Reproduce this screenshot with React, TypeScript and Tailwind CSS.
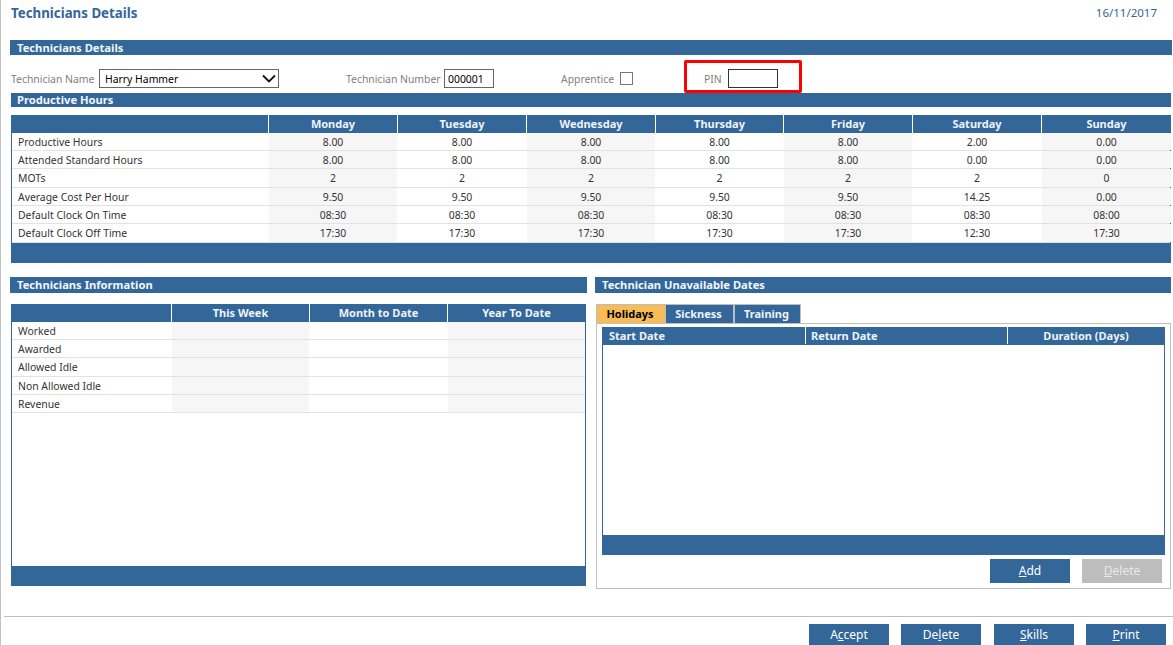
const F = { fontFamily: '"Noto Sans", "Liberation Sans", sans-serif' };

const days = ['Monday', 'Tuesday', 'Wednesday', 'Thursday', 'Friday', 'Saturday', 'Sunday'];
const hours: [string, string[], string][] = [
  ['Productive Hours', ['8.00', '8.00', '8.00', '8.00', '8.00', '2.00', '0.00'], 'h-[18px]'],
  ['Attended Standard Hours', ['8.00', '8.00', '8.00', '8.00', '8.00', '0.00', '0.00'], 'h-[18px]'],
  ['MOTs', ['2', '2', '2', '2', '2', '2', '0'], 'h-[19px]'],
  ['Average Cost Per Hour', ['9.50', '9.50', '9.50', '9.50', '9.50', '14.25', '0.00'], 'h-[18px]'],
  ['Default Clock On Time', ['08:30', '08:30', '08:30', '08:30', '08:30', '08:30', '08:00'], 'h-[18px]'],
  ['Default Clock Off Time', ['17:30', '17:30', '17:30', '17:30', '17:30', '12:30', '17:30'], 'h-[19px]'],
];
const hoursCols = 'grid grid-cols-[256px_128px_128px_128px_127px_128px_128px_129px] gap-x-px leading-[13px]';
const infoCols = 'grid grid-cols-[159px_137px_137px_137px] gap-x-px leading-[13px]';
const infoRows: [string, string][] = [
  ['Worked', 'h-[18px]'],
  ['Awarded', 'h-[18px]'],
  ['Allowed Idle', 'h-[19px]'],
  ['Non Allowed Idle', 'h-[18px]'],
  ['Revenue', 'h-[18px]'],
];

function Bar({ title, className }: { title: string; className: string }) {
  return (
    <div className={`bg-[#336699] text-[#f2f6fa] font-bold text-[11.2px] leading-none flex items-center ${className}`}>
      {title}
    </div>
  );
}

function Btn({ pre, u, post, className }: { pre: string; u: string; post: string; className: string }) {
  return (
    <button className={`w-20 text-[12px] flex items-center justify-center ${className}`}>
      {pre}
      <span className="underline">{u}</span>
      {post}
    </button>
  );
}

export default function App() {
  return (
    <div style={F} className="w-[1173px] h-[645px] overflow-hidden bg-white text-[10.4px] text-[#333333] border-l border-[#c0c0c0]">
      <div className="h-[40px] pl-[10px] pr-[16px] pt-[5px] flex justify-between text-[#336699]">
        <div className="font-bold text-[13.3px] leading-[16px]">Technicians Details</div>
        <div className="text-[11.5px] leading-[16px]">16/11/2017</div>
      </div>

      <div className="ml-[9px] w-[1162px]">
        <Bar title="Technicians Details" className="h-[15px] pl-[7px]" />
      </div>

      <div className="ml-[10px] h-[38px] flex items-start text-[#808080] whitespace-nowrap">
        <div className="mt-[14px] pt-[2px] h-[19px] flex items-center w-[88px]">Technician Name</div>
        <div className="mt-[14px] pt-[2px] w-[180px] h-[19px] border border-[#666666] flex items-center justify-between pl-[5px] pr-[2px] text-black">
          <span>Harry Hammer</span>
          <svg className="-mt-[3px]" width="14" height="9" viewBox="0 0 14 9" fill="none" stroke="#111111" strokeWidth="1.8">
            <path d="M1 1.5 L7 7.5 L13 1.5" />
          </svg>
        </div>
        <div className="mt-[14px] pt-[2px] ml-[67px] h-[19px] flex items-center w-[98px]">Technician Number</div>
        <div className="mt-[14px] pt-[2px] w-[50px] h-[19px] border border-[#666666] flex items-center pl-[3px] text-black">000001</div>
        <div className="mt-[14px] pt-[2px] ml-[67px] h-[19px] flex items-center w-[59px]">Apprentice</div>
        <div className="mt-[17px] w-[13px] h-[13px] border border-[#777777]" />
        <div className="mt-[5px] ml-[51px] w-[118px] h-[33px] border-[3px] border-[#ff0000] rounded-[2px] flex items-start relative z-10 bg-white">
          <span className="ml-[17px] mt-[6px] pt-[2px] w-[24px] h-[19px] flex items-center">PIN</span>
          <div className="mt-[6px] w-[50px] h-[19px] border border-[#333333]" />
        </div>
      </div>

      <div className="ml-[10px] w-[1160px]">
        <Bar title="Productive Hours" className="h-[14px] pl-[6px]" />
      </div>

      <div className="ml-[10px] mt-[8px] w-[1160px] border-x border-[#336699]">
        <div className={`${hoursCols} bg-[#336699] h-[18px]`}>
          <div />
          {days.map((d) => (
            <div key={d} className="relative pb-[2px] font-bold text-[#eef3f8] text-[11px] flex items-center justify-center before:absolute before:left-[-1px] before:top-0 before:bottom-0 before:w-px before:bg-white">
              {d}
            </div>
          ))}
        </div>
        {hours.map(([label, vals, h]) => {
          const pt = h === 'h-[19px]' ? 'pt-px' : 'pt-[2px]';
          return (
            <div key={label} className={`${hoursCols} ${h} border-b border-[#e2e2e2]`}>
              <div className={`pl-[6px] flex items-center ${pt}`}>{label}</div>
              {vals.map((v, i) => (
                <div key={i} className={`flex items-center justify-center ${pt} ${i % 2 === 0 ? 'bg-[#f6f6f6]' : 'bg-white'}`}>
                  {v}
                </div>
              ))}
            </div>
          );
        })}
      </div>
      <div className="ml-[10px] w-[1160px] h-[20px] bg-[#336699]" />

      <div className="mt-[14px] ml-[9px] w-[1161px] flex gap-[8px] items-start">
        <div className="w-[577px]">
          <Bar title="Technicians Information" className="h-[16px] pl-[7px]" />
          <div className="mt-[11px] ml-[1px] w-[575px] h-[282px] flex flex-col border-x border-[#336699]">
            <div className={`${infoCols} bg-[#336699] h-[18px]`}>
              <div />
              {['This Week', 'Month to Date', 'Year To Date'].map((d) => (
                <div key={d} className="relative pb-[2px] font-bold text-[#eef3f8] text-[11px] flex items-center justify-center before:absolute before:left-[-1px] before:top-0 before:bottom-0 before:w-px before:bg-white">
                  {d}
                </div>
              ))}
            </div>
            {infoRows.map(([label, h]) => (
              <div key={label} className={`${infoCols} ${h} border-b border-[#e2e2e2]`}>
                <div className={`pl-[6px] flex items-center ${h === 'h-[19px]' ? 'pt-px' : 'pt-[2px]'}`}>{label}</div>
                <div className="bg-[#f6f6f6]" />
                <div />
                <div className="bg-[#f6f6f6]" />
              </div>
            ))}
            <div className="mt-auto h-[20px] bg-[#336699] -mx-px" />
          </div>
        </div>

        <div className="w-[576px]">
          <Bar title="Technician Unavailable Dates" className="h-[16px] pl-[7px]" />
          <div className="mt-[11px] ml-[1px] w-[205px] flex h-[19px] items-stretch font-bold text-[11px] bg-[#b9bec4] pl-px pr-px pt-px gap-x-px">
            <div className="w-[68px] pr-[2px] bg-[#f7bc55] text-black flex items-center justify-center">Holidays</div>
            <div className="w-[67px] pr-[2px] bg-[#336699] text-[#eef3f8] flex items-center justify-center">Sickness</div>
            <div className="ml-px w-[65px] pr-[2px] bg-[#336699] text-[#eef3f8] flex items-center justify-center">Training</div>
          </div>
          <div className="ml-[1px] w-[575px] h-[266px] border border-[#c0c0c0] px-[5px] pt-[3px]">
            <div className="h-[208px] flex flex-col border-x border-[#336699]">
              <div className="grid grid-cols-[202px_201px_1fr] gap-x-px bg-[#336699] h-[18px] font-bold text-[#eef3f8] text-[11px]">
                <div className="pl-[6px] pt-px flex items-center">Start Date</div>
                <div className="relative pl-[5px] pt-px flex items-center before:absolute before:left-[-1px] before:top-0 before:bottom-[1px] before:w-px before:bg-white">Return Date</div>
                <div className="relative pt-px flex items-center justify-center before:absolute before:left-[-1px] before:top-0 before:bottom-[1px] before:w-px before:bg-white">Duration (Days)</div>
              </div>
            </div>
            <div className="h-[20px] bg-[#336699]" />
            <div className="flex justify-end gap-[12px] mt-[4px] mr-[3px]">
              <Btn pre="" u="A" post="dd" className="h-[24px] bg-[#336699] text-white" />
              <Btn pre="" u="D" post="elete" className="h-[24px] bg-[#bdbdbd] text-[#e8e8e8]" />
            </div>
          </div>
        </div>
      </div>

      <div className="mt-[27px] ml-[3px] h-px bg-[#c0c0c0]" />
      <div className="mt-[7px] ml-[808px] flex gap-[12px]">
        <Btn pre="A" u="c" post="cept" className="h-[21px] bg-[#336699] text-white" />
        <Btn pre="De" u="l" post="ete" className="h-[21px] bg-[#336699] text-white" />
        <Btn pre="" u="S" post="kills" className="h-[21px] ml-px bg-[#336699] text-white" />
        <Btn pre="" u="P" post="rint" className="h-[21px] bg-[#336699] text-white" />
      </div>
    </div>
  );
}
